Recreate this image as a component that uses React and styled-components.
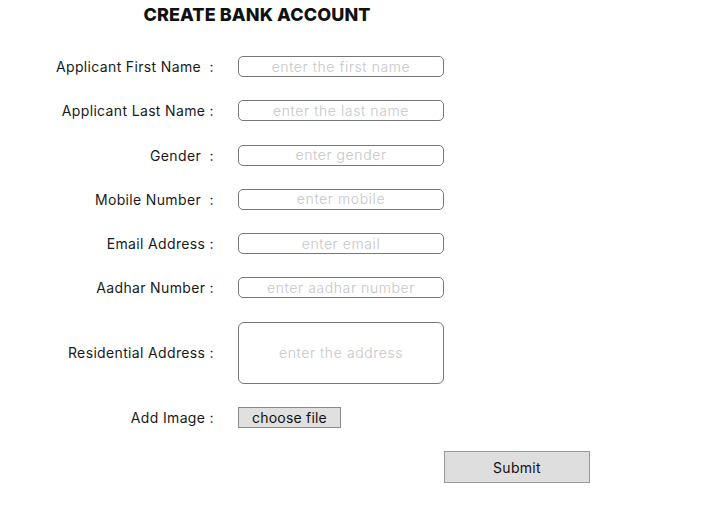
import React from "react";
import styled, { createGlobalStyle } from "styled-components";

const GlobalStyle = createGlobalStyle`
    body {
        margin: 0;
        background: #ffffff;
        font-family: Inter, "Open Sans", sans-serif;
        color: #111111;
    }
`;

const Page = styled.div`
    width: 718px;
    height: 506px;
    box-sizing: border-box;
    padding-top: 4px;
`;

const Title = styled.h1`
    width: 514px;
    margin: 0 0 30px 0;
    text-align: center;
    font-size: 18px;
    line-height: 22px;
    font-weight: 800;
    letter-spacing: 0.1px;
`;

const Form = styled.form`
    display: grid;
    grid-template-columns: 214px 206px;
    column-gap: 24px;
    row-gap: 23.3px;
    align-items: center;
`;

const Label = styled.label`
    text-align: right;
    font-size: 14px;
    letter-spacing: 0.35px;
    white-space: pre;
    color: #1a1a1a;
`;

const TextInput = styled.input`
    box-sizing: border-box;
    width: 206px;
    height: 21px;
    margin: 0;
    padding: 0 6px 1px;
    border: 1px solid #777777;
    border-radius: 5px;
    font-family: inherit;
    font-size: 14px;
    font-weight: 300;
    letter-spacing: 0.6px;
    text-align: center;
    outline: none;
    &::placeholder {
        color: #c6c6c6;
    }
`;

const AddressBox = styled.textarea`
    box-sizing: border-box;
    width: 206px;
    height: 62px;
    margin: 0;
    padding: 21px 6px 0;
    border: 1px solid #777777;
    border-radius: 6px;
    font-family: inherit;
    font-size: 14px;
    font-weight: 300;
    letter-spacing: 0.6px;
    text-align: center;
    resize: none;
    outline: none;
    &::placeholder {
        color: #c6c6c6;
    }
`;

const FileButton = styled.button`
    box-sizing: border-box;
    width: 103px;
    height: 21px;
    padding: 0;
    background: #e0e0e0;
    border: 1px solid #8a8a8a;
    font-family: inherit;
    font-size: 14px;
    letter-spacing: 0.2px;
    color: #111111;
`;

const Footer = styled.div`
    padding: 23px 0 0 444px;
`;

const SubmitButton = styled.button`
    box-sizing: border-box;
    width: 146px;
    height: 32px;
    background: #dedede;
    border: 1px solid #999999;
    font-family: inherit;
    font-size: 14px;
    letter-spacing: 0.3px;
    color: #111111;
`;

const fields = [
    { label: "Applicant First Name  :", placeholder: "enter the first name" },
    { label: "Applicant Last Name :", placeholder: "enter the last name" },
    { label: "Gender  :", placeholder: "enter gender" },
    { label: "Mobile Number  :", placeholder: "enter mobile" },
    { label: "Email Address :", placeholder: "enter email" },
    { label: "Aadhar Number :", placeholder: "enter aadhar number" },
];

const App = () => {
    return (
        <Page>
            <GlobalStyle />
            <Title>CREATE BANK ACCOUNT</Title>
            <Form onSubmit={e => e.preventDefault()}>
                {fields.map((field, index) => (
                    <React.Fragment key={index}>
                        <Label>{field.label}</Label>
                        <TextInput placeholder={field.placeholder} />
                    </React.Fragment>
                ))}
                <Label>Residential Address :</Label>
                <AddressBox placeholder="enter the address" />
                <Label>Add Image :</Label>
                <div>
                    <FileButton type="button">choose file</FileButton>
                </div>
            </Form>
            <Footer>
                <SubmitButton>Submit</SubmitButton>
            </Footer>
        </Page>
    );
};

export default App;
